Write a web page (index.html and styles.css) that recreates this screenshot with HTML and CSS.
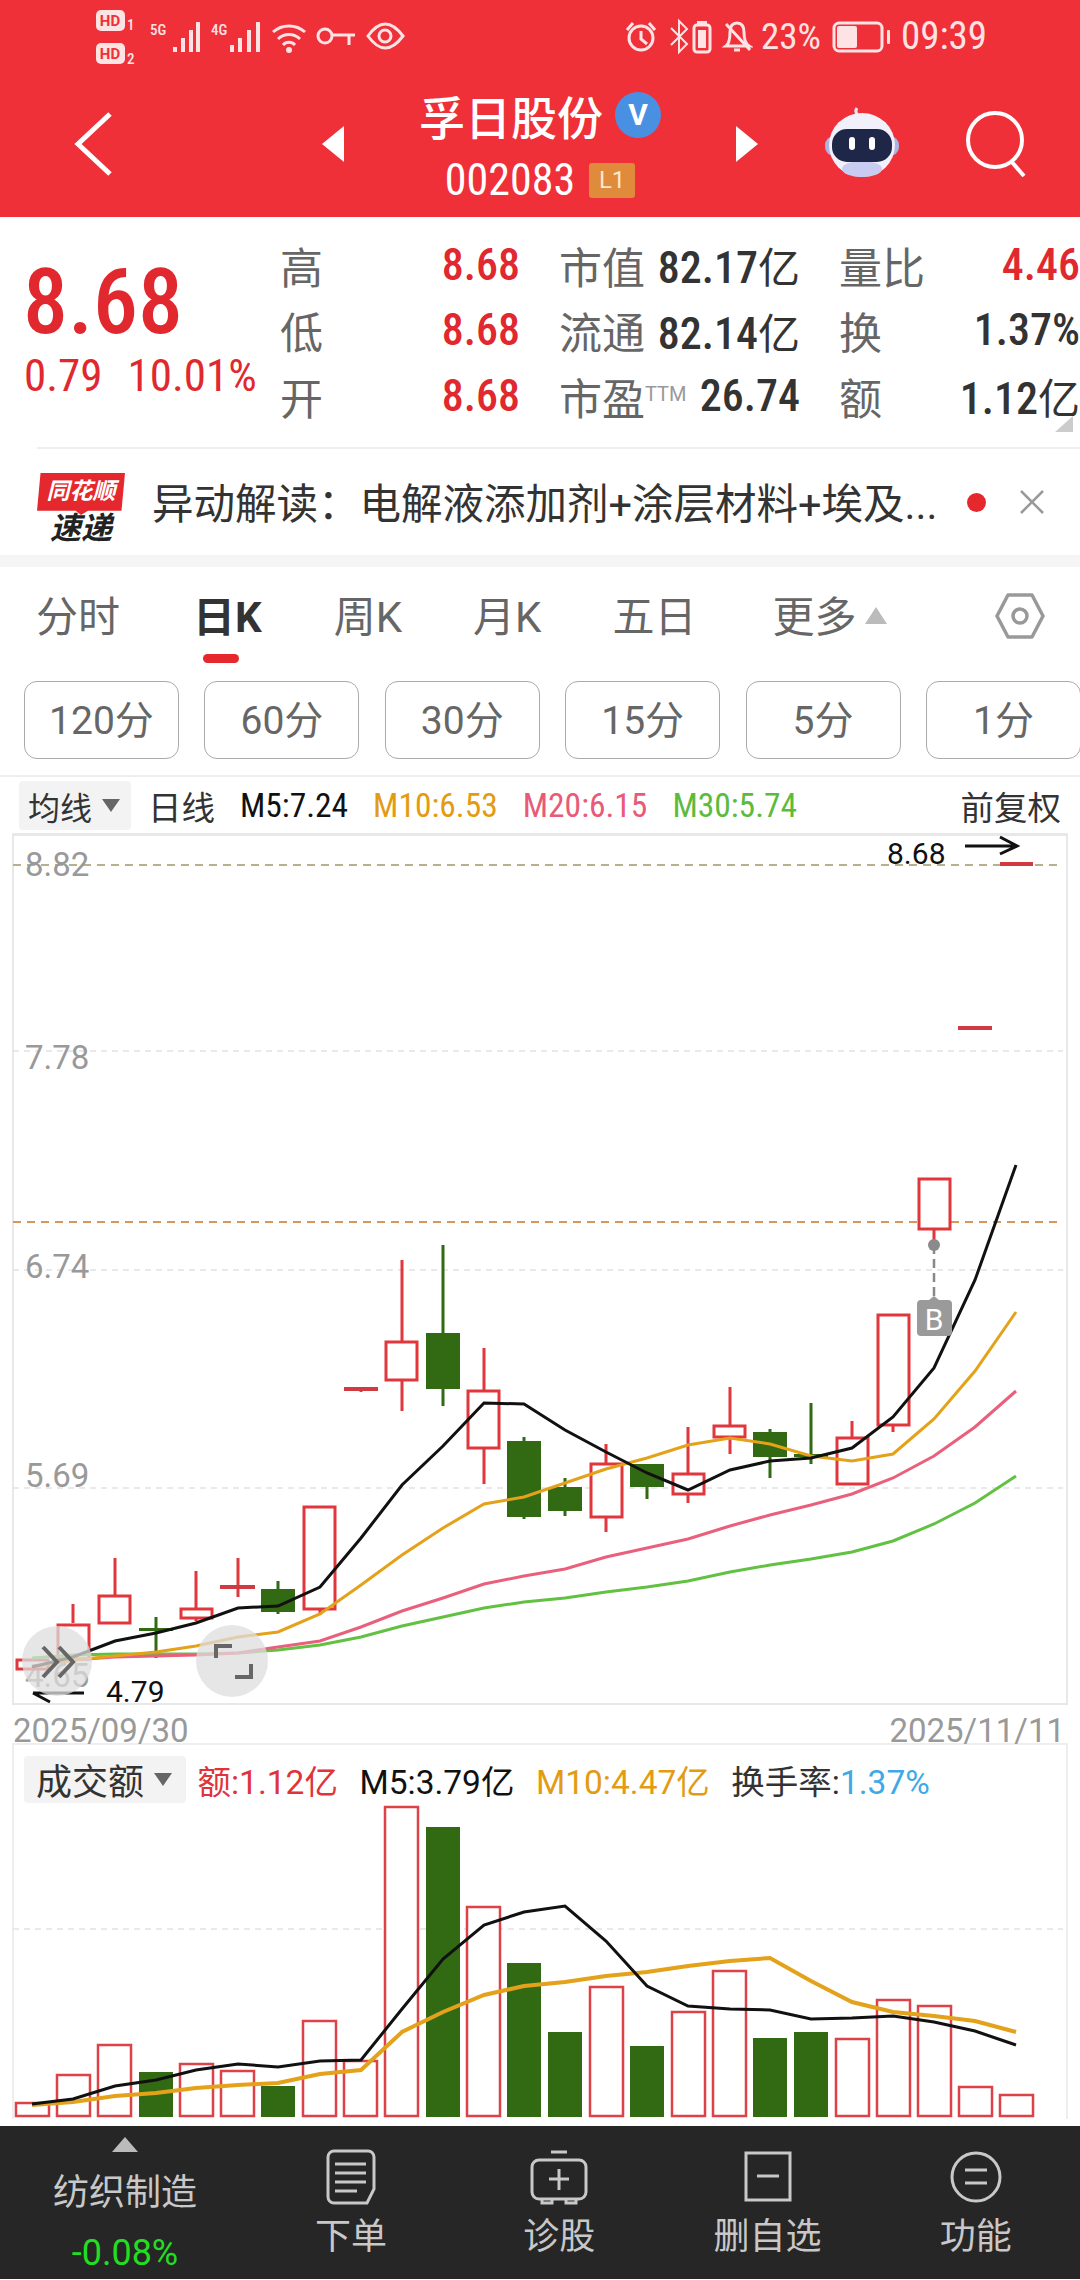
FILE: index.html
```html
<!DOCTYPE html>
<html lang="zh-CN">
<head>
    <meta charset="UTF-8">
    <meta name="viewport" content="width=device-width, initial-scale=1.0">
    <title>孚日股份 002083</title>
    <link rel="stylesheet" href="styles.css">
</head>
<body>
<div class="page">
    <header class="top">
        <!-- status bar -->
        <div class="status">
            <svg class="status-left" width="310" height="72" viewBox="95 0 310 72">
                <rect x="96" y="10" width="29" height="21" rx="5" class="si-fill"/>
                <text x="110" y="26" class="si-hd">HD</text>
                <text x="127" y="30" class="si-small">1</text>
                <rect x="96" y="43" width="29" height="21" rx="5" class="si-fill"/>
                <text x="110" y="59" class="si-hd">HD</text>
                <text x="127" y="64" class="si-small">2</text>
                <text x="150" y="35" class="si-small">5G</text>
                <path d="M175 47v5M183 38v14M191 30v22M198 22v30" class="si-bar"/>
                <text x="211" y="35" class="si-small">4G</text>
                <path d="M232 45v7M240 38v14M249 30v22M258 22v30" class="si-bar"/>
                <path d="M273 32a24 24 0 0 1 32 0M278 39a16 16 0 0 1 22 0M283 45a8 8 0 0 1 12 0" class="si-line"/>
                <circle cx="289" cy="50" r="3" class="si-fill"/>
                <circle cx="325" cy="36" r="7" class="si-line"/>
                <path d="M332 35h23M349 35v10" class="si-line"/>
                <path d="M368 36q17-24 35 0q-18 24-35 0z" class="si-line"/>
                <circle cx="385" cy="36" r="6" class="si-line"/>
            </svg>
            <svg class="status-right" width="128" height="72" viewBox="625 0 128 72">
                <circle cx="641" cy="38" r="12" class="si-line"/>
                <path d="M641 31v8l6 5" class="si-line"/>
                <path d="M627 30l6-7M655 30l-6-7" class="si-line"/>
                <path d="M671 28l16 16l-8 8v-31l8 8l-16 16" class="si-thin"/>
                <rect x="694" y="25" width="16" height="27" rx="3" class="si-line"/>
                <rect x="697" y="21" width="10" height="3" class="si-fill"/>
                <rect x="698" y="30" width="8" height="18" class="si-fill"/>
                <path d="M726 46q4-3 4-14q0-9 7-9q7 0 7 9q0 11 5 14zM734 50h6M726 24l24 26" class="si-line"/>
            </svg>
            <span class="status-pct">23%</span>
            <svg class="battery" width="60" height="72" viewBox="832 0 60 72">
                <rect x="834" y="23" width="48" height="28" rx="5" class="si-line"/>
                <rect x="837" y="26" width="20" height="22" rx="2" class="si-fill"/>
                <rect x="887" y="30" width="3" height="14" rx="1" class="si-fill"/>
            </svg>
            <span class="status-time">09:39</span>
        </div>

        <!-- stock title bar -->
        <div class="titlebar">
            <div class="title-left">
                <svg width="40" height="66" viewBox="0 0 40 66" class="back">
                    <path d="M36 3L4 33l32 30" fill="none" stroke="#fff" stroke-width="5"/>
                </svg>
            </div>
            <svg width="24" height="36" viewBox="0 0 24 36"><path d="M23 0v36L1 18z" fill="#fff"/></svg>
            <div class="title-mid">
                <div class="title-name">孚日股份<span class="v-badge">V</span></div>
                <div class="title-code"><span class="num">002083</span><span class="l1">L1</span></div>
            </div>
            <svg width="24" height="36" viewBox="0 0 24 36"><path d="M1 0v36l22-18z" fill="#fff"/></svg>
            <div class="title-right">
                <svg class="robot" width="74" height="72" viewBox="0 0 74 72">
                    <path d="M34 10q-5-4-2-8" fill="none" stroke="#e8e6f5" stroke-width="3"/>
                    <rect x="0" y="30" width="74" height="20" rx="9" fill="#aeb3e6"/>
                    <ellipse cx="37" cy="39" rx="33" ry="32" fill="#f1f0fb"/>
                    <ellipse cx="37" cy="63" rx="20" ry="8" fill="#c9cbf0"/>
                    <rect x="7" y="23" width="60" height="33" rx="15" fill="#1e2747"/>
                    <rect x="24" y="31" width="6" height="13" rx="3" fill="#fff"/>
                    <rect x="44" y="31" width="6" height="13" rx="3" fill="#fff"/>
                </svg>
                <svg width="62" height="66" viewBox="0 0 62 66">
                    <circle cx="30" cy="29" r="27" fill="none" stroke="#fff" stroke-width="4"/>
                    <path d="M46 50l13 15" fill="none" stroke="#fff" stroke-width="4"/>
                </svg>
            </div>
        </div>
    </header>

    <!-- quote numbers -->
    <section class="quote">
        <div class="price-box">
            <div class="price num">8.68</div>
            <div class="change num"><span>0.79</span><span>10.01%</span></div>
        </div>
        <div class="quote-grid">
            <div class="q-cell"><span class="q-label">高</span><span class="q-val up num">8.68</span></div>
            <div class="q-cell"><span class="q-label">市值</span><span class="q-val num">82.17<i>亿</i></span></div>
            <div class="q-cell"><span class="q-label">量比</span><span class="q-val up num">4.46</span></div>
            <div class="q-cell"><span class="q-label">低</span><span class="q-val up num">8.68</span></div>
            <div class="q-cell"><span class="q-label">流通</span><span class="q-val num">82.14<i>亿</i></span></div>
            <div class="q-cell"><span class="q-label">换</span><span class="q-val num">1.37%</span></div>
            <div class="q-cell"><span class="q-label">开</span><span class="q-val up num">8.68</span></div>
            <div class="q-cell"><span class="q-label">市盈<sup class="ttm">TTM</sup></span><span class="q-val num">26.74</span></div>
            <div class="q-cell"><span class="q-label">额</span><span class="q-val num">1.12<i>亿</i></span></div>
        </div>
        <span class="corner"></span>
    </section>

    <!-- news strip -->
    <section class="news">
        <div class="logo">
            <div class="logo-flag">同花顺</div>
            <div class="logo-sub">速递</div>
        </div>
        <div class="news-text">异动解读：电解液添加剂+涂层材料+埃及...</div>
        <span class="news-dot"></span>
        <svg class="news-close" width="26" height="26" viewBox="0 0 26 26">
            <path d="M2 2l22 22M24 2L2 24" fill="none" stroke="#999" stroke-width="2.5"/>
        </svg>
    </section>
    <div class="band"></div>

    <!-- period tabs -->
    <nav class="tabs">
        <span class="tab">分时</span>
        <span class="tab active">日K</span>
        <span class="tab">周K</span>
        <span class="tab">月K</span>
        <span class="tab">五日</span>
        <span class="tab more">更多<i class="more-arrow"></i></span>
        <svg class="gear" width="50" height="48" viewBox="0 0 50 48">
            <path d="M13 3h24l11 21l-11 21H13L2 24z" fill="none" stroke="#999" stroke-width="3.5" stroke-linejoin="round"/>
            <circle cx="25" cy="24" r="7" fill="none" stroke="#999" stroke-width="3.5"/>
        </svg>
    </nav>
    <div class="periods">
        <span class="period">120分</span>
        <span class="period">60分</span>
        <span class="period">30分</span>
        <span class="period">15分</span>
        <span class="period">5分</span>
        <span class="period">1分</span>
    </div>

    <!-- moving average legend -->
    <div class="legend">
        <span class="chip">均线<i class="chip-arrow"></i></span>
        <span class="lg-dark">日线</span>
        <span class="lg-black num">M5:7.24</span>
        <span class="lg-orange num">M10:6.53</span>
        <span class="lg-pink num">M20:6.15</span>
        <span class="lg-green num">M30:5.74</span>
        <span class="lg-dark adj">前复权</span>
    </div>

    <!-- K line chart, coordinates are page pixels -->
    <svg class="kline" width="1080" height="871" viewBox="0 835 1080 871">
        <path d="M13 835V1705H1067V835z" class="frame"/>
        <path d="M13 836H1067" class="frame"/>
        <path d="M13 1052H1063M13 1271H1063M13 1489H1063" class="grid"/>
        <path d="M13 866H1063" class="grid-high"/>
        <path d="M13 1223H1063" class="grid-now"/>

        <text x="25" y="877" class="axis">8.82</text>
        <text x="25" y="1070" class="axis">7.78</text>
        <text x="25" y="1279" class="axis">6.74</text>
        <text x="25" y="1488" class="axis">5.69</text>
        <text x="25" y="1688" class="axis">4.65</text>

        <!-- wicks -->
        <path class="wick-up" d="M73 1605V1624M115 1559V1597M196 1572V1622M238 1559V1598M320 1610V1616M361 1390V1393M402 1261V1412M484 1349V1485M606 1445V1533M688 1428V1504M730 1388V1455M852 1422V1438M893 1426V1433M934 1230V1245"/>
        <path class="wick-down" d="M156 1618V1659M278 1582V1615M443 1246V1407M524 1438V1520M565 1479V1517M647 1465V1500M770 1430V1479M811 1404V1465"/>
        <!-- rising days -->
        <g class="up-body">
            <rect x="17" y="1661" width="31" height="9"/>
            <rect x="58" y="1626" width="31" height="34"/>
            <rect x="99" y="1597" width="31" height="27"/>
            <rect x="181" y="1610" width="31" height="9"/>
            <rect x="304" y="1508" width="31" height="102"/>
            <rect x="386" y="1343" width="31" height="38"/>
            <rect x="468" y="1392" width="31" height="57"/>
            <rect x="591" y="1465" width="31" height="53"/>
            <rect x="673" y="1475" width="31" height="20"/>
            <rect x="714" y="1427" width="31" height="11"/>
            <rect x="837" y="1439" width="31" height="46"/>
            <rect x="878" y="1316" width="31" height="110"/>
            <rect x="919" y="1180" width="31" height="50"/>
        </g>
        <path class="flat-up" d="M220 1588H255M344 1390H378M958 1029H992M1000 865H1033"/>
        <!-- falling days -->
        <g class="down-body">
            <rect x="139" y="1629" width="34" height="3"/>
            <rect x="261" y="1590" width="34" height="23"/>
            <rect x="426" y="1334" width="34" height="56"/>
            <rect x="507" y="1442" width="34" height="76"/>
            <rect x="548" y="1488" width="34" height="24"/>
            <rect x="630" y="1465" width="34" height="23"/>
            <rect x="753" y="1433" width="34" height="25"/>
            <rect x="794" y="1455" width="34" height="3"/>
        </g>

        <polyline class="ma30" points="32,1659 73,1656 115,1655 156,1655 196,1655 238,1654 278,1651 320,1646 361,1638 402,1627 443,1618 484,1609 524,1603 565,1599 606,1593 647,1588 688,1582 730,1573 770,1566 811,1560 852,1553 893,1542 934,1525 975,1504 1016,1477"/>
        <polyline class="ma20" points="32,1667 73,1661 115,1658 156,1657 196,1656 238,1654 278,1648 320,1642 361,1628 402,1612 443,1599 484,1585 524,1577 565,1570 606,1558 647,1549 688,1540 730,1527 770,1516 811,1506 852,1495 893,1479 934,1457 975,1428 1016,1392"/>
        <polyline class="ma10" points="32,1668 73,1661 115,1657 156,1653 196,1647 238,1638 278,1633 320,1615 361,1586 402,1556 443,1529 484,1505 524,1498 565,1484 606,1470 647,1459 688,1446 730,1439 770,1445 811,1457 852,1462 893,1455 934,1420 975,1372 1016,1313"/>
        <polyline class="ma5" points="32,1668 73,1658 115,1642 156,1634 196,1624 238,1609 278,1607 320,1588 361,1539 402,1486 443,1447 484,1404 524,1405 565,1431 606,1453 647,1474 688,1491 730,1471 770,1462 811,1459 852,1449 893,1418 934,1369 975,1281 1016,1166"/>

        <!-- high and low flags -->
        <text x="887" y="865" class="flag-text">8.68</text>
        <path d="M965 847H1016M1000 838l17 9l-17 8" class="flag-arrow"/>
        <text x="106" y="1703" class="flag-text">4.79</text>
        <path d="M84 1694H33M50 1703l-17-9" class="flag-arrow"/>

        <!-- buy marker -->
        <path d="M934 1246V1298" class="b-line"/>
        <circle cx="934" cy="1246" r="6" fill="#8a8a8a"/>
        <path d="M921 1301h8l5-4l5 4h9a4 4 0 0 1 4 4v28a4 4 0 0 1-4 4h-27a4 4 0 0 1-4-4v-28a4 4 0 0 1 4-4z" fill="#9a9a9a"/>
        <text x="934" y="1331" class="b-text">B</text>

        <!-- floating chart buttons -->
        <circle cx="57" cy="1662" r="35" class="float-btn"/>
        <path d="M43 1648l14 15l-14 15M59 1648l14 15l-14 15" class="float-mark"/>
        <circle cx="232" cy="1662" r="36" class="float-btn"/>
        <path d="M216 1659v-12h16M251 1665v13h-16" class="float-mark"/>
    </svg>

    <div class="dates"><span>2025/09/30</span><span>2025/11/11</span></div>

    <!-- turnover panel -->
    <section class="vol">
        <div class="vol-legend">
            <span class="chip chip-wide">成交额<i class="chip-arrow"></i></span>
            <span class="lg-red">额:1.12亿</span>
            <span class="lg-black">M5:3.79亿</span>
            <span class="lg-orange">M10:4.47亿</span>
            <span class="lg-dark">换手率:<b class="lg-blue">1.37%</b></span>
        </div>
        <svg class="vol-chart" width="1080" height="316" viewBox="0 1804 1080 316">
            <path d="M13 1930H1063" class="grid"/>
            <g class="vol-up">
                <rect x="16" y="2104" width="33" height="13"/>
                <rect x="57" y="2076" width="33" height="41"/>
                <rect x="98" y="2046" width="33" height="71"/>
                <rect x="180" y="2065" width="33" height="52"/>
                <rect x="221" y="2072" width="33" height="45"/>
                <rect x="303" y="2022" width="33" height="95"/>
                <rect x="344" y="2062" width="33" height="55"/>
                <rect x="385" y="1808" width="33" height="309"/>
                <rect x="467" y="1908" width="33" height="209"/>
                <rect x="590" y="1988" width="33" height="129"/>
                <rect x="672" y="2013" width="33" height="104"/>
                <rect x="713" y="1972" width="33" height="145"/>
                <rect x="836" y="2040" width="33" height="77"/>
                <rect x="877" y="2001" width="33" height="116"/>
                <rect x="918" y="2007" width="33" height="110"/>
                <rect x="959" y="2088" width="33" height="29"/>
                <rect x="1000" y="2096" width="33" height="21"/>
            </g>
            <g class="vol-down">
                <rect x="139" y="2073" width="34" height="45"/>
                <rect x="261" y="2087" width="34" height="31"/>
                <rect x="426" y="1828" width="34" height="290"/>
                <rect x="507" y="1964" width="34" height="154"/>
                <rect x="548" y="2033" width="34" height="85"/>
                <rect x="630" y="2047" width="34" height="71"/>
                <rect x="753" y="2039" width="34" height="79"/>
                <rect x="794" y="2033" width="34" height="85"/>
            </g>
            <polyline class="vol-ma10" points="32,2106 73,2103 115,2097 156,2094 196,2089 238,2086 278,2084 320,2075 361,2071 402,2033 443,2013 484,1996 524,1987 565,1983 606,1977 647,1973 688,1967 730,1962 770,1959 811,1982 852,2003 893,2013 934,2017 975,2022 1016,2033"/>
            <polyline class="ma5" points="32,2105 73,2100 115,2087 156,2081 196,2071 238,2065 278,2068 320,2062 361,2061 402,2010 443,1960 484,1926 524,1913 565,1907 606,1942 647,1987 688,2007 730,2010 770,2011 811,2020 852,2019 893,2017 934,2023 975,2032 1016,2046"/>
        </svg>
    </section>

    <!-- bottom toolbar -->
    <footer class="toolbar">
        <div class="sector">
            <i class="sector-arrow"></i>
            <div class="sector-name">纺织制造</div>
            <div class="sector-pct">-0.08%</div>
        </div>
        <div class="tool">
            <svg width="50" height="56" viewBox="0 0 50 56">
                <path d="M8 2h34a6 6 0 0 1 6 6v32l-7 14H8a6 6 0 0 1-6-6V8a6 6 0 0 1 6-6z" class="tool-line"/>
                <path d="M9 15h31M9 24h31M9 33h31M9 42h22" class="tool-line"/>
            </svg>
            <span>下单</span>
        </div>
        <div class="tool">
            <svg width="58" height="56" viewBox="0 0 58 56">
                <path d="M21 3h16" class="tool-line"/>
                <rect x="2" y="11" width="54" height="39" rx="7" class="tool-line"/>
                <path d="M29 20v21M19 30h20M12 50v4h10v-4M36 50v4h10v-4" class="tool-line"/>
            </svg>
            <span>诊股</span>
        </div>
        <div class="tool">
            <svg width="48" height="56" viewBox="0 0 48 56">
                <rect x="2" y="4" width="44" height="47" class="tool-line"/>
                <path d="M13 27h22" class="tool-line"/>
            </svg>
            <span>删自选</span>
        </div>
        <div class="tool">
            <svg width="52" height="56" viewBox="0 0 52 56">
                <circle cx="26" cy="28" r="24" class="tool-line"/>
                <path d="M15 21h22M15 34h22" class="tool-line"/>
            </svg>
            <span>功能</span>
        </div>
    </footer>
</div>
</body>
</html>
```

FILE: styles.css
```css
* {
    box-sizing: border-box;
}
body {
    margin: 0;
    background-color: white;
    font-family: Roboto, "Noto Sans CJK SC", sans-serif;
}
i {
    font-style: normal;
}
svg {
    display: block;
    flex: none;
}
.page {
    width: 1080px;
    height: 2280px;
    overflow: hidden;
}
/* narrow digits used in the quote block */
.num {
    font-stretch: 85%;
}

/* red header */
.top {
    background-color: #ef3039;
    color: white;
    height: 217px;
}
.status {
    display: flex;
    align-items: center;
    height: 72px;
    padding-left: 95px;
    color: #fde3e3;
}
.status-right {
    margin-left: 220px;
}
.status-pct {
    width: 79px;
    padding-left: 8px;
    font-size: 37px;
    font-stretch: 85%;
    white-space: nowrap;
}
.status-time {
    margin-left: 9px;
    font-size: 39px;
    font-stretch: 85%;
}
.si-fill {
    fill: #fde3e3;
}
.si-line {
    fill: none;
    stroke: #fde3e3;
    stroke-width: 3;
}
.si-thin {
    fill: none;
    stroke: #fde3e3;
    stroke-width: 2;
}
.si-bar {
    fill: none;
    stroke: #fde3e3;
    stroke-width: 4;
}
.si-hd {
    fill: #ef3039;
    font-size: 15px;
    font-weight: bold;
    text-anchor: middle;
}
.si-small {
    fill: #fde3e3;
    font-size: 15px;
    font-weight: 500;
    font-stretch: 85%;
}
.titlebar {
    display: flex;
    align-items: center;
    height: 144px;
}
.title-left {
    width: 321px;
    padding-left: 74px;
}
.title-mid {
    width: 390px;
    text-align: center;
}
.title-right {
    display: flex;
    align-items: center;
    padding-left: 66px;
}
.robot {
    margin-right: 66px;
    margin-top: -4px;
}
.title-name {
    display: flex;
    align-items: center;
    justify-content: center;
    height: 56px;
    margin-top: -1px;
    font-size: 46px;
    font-weight: 500;
}
.v-badge {
    width: 46px;
    height: 46px;
    margin-left: 12px;
    border-radius: 50%;
    background-color: #4a90e2;
    font-size: 30px;
    font-weight: bold;
    line-height: 46px;
}
.title-code {
    display: flex;
    align-items: center;
    justify-content: center;
    height: 40px;
    margin-top: 17px;
    font-size: 44px;
}
.l1 {
    width: 46px;
    height: 35px;
    margin-left: 14px;
    background-color: #e08a3c;
    border-radius: 3px;
    color: #fde8cc;
    font-size: 24px;
    line-height: 35px;
}

/* quote block */
.quote {
    position: relative;
    display: flex;
    height: 230px;
}
.price-box {
    width: 280px;
    padding-left: 23px;
    color: #e0282e;
}
.price {
    height: 131px;
    padding-top: 41px;
    font-size: 90px;
    line-height: 90px;
    font-weight: 500;
}
.change {
    display: flex;
    gap: 25px;
    margin-top: 4px;
    padding-left: 1px;
    font-size: 45px;
    line-height: 48px;
    white-space: nowrap;
}
.quote-grid {
    display: grid;
    grid-template-columns: 240px 241px 241px;
    grid-auto-rows: 65.5px;
    column-gap: 39px;
    padding-top: 15px;
}
.q-cell {
    display: flex;
    align-items: center;
    justify-content: space-between;
    white-space: nowrap;
}
.q-label {
    color: #666;
    font-size: 43px;
}
.q-val {
    color: #333;
    font-size: 44px;
    font-weight: 500;
}
.q-val i {
    font-size: 42px;
    font-weight: 400;
}
.q-val.up {
    color: #e0282e;
}
.ttm {
    font-size: 20px;
    color: #999;
    vertical-align: 14px;
    line-height: 0;
}
.corner {
    position: absolute;
    right: 7px;
    bottom: 15px;
    border-left: 18px solid transparent;
    border-bottom: 16px solid #ccc;
}

/* news strip */
.news {
    display: flex;
    align-items: center;
    height: 108px;
    margin-left: 37px;
    border-top: 2px solid #eee;
}
.logo {
    width: 88px;
    height: 72px;
    margin-top: 14px;
    font-style: italic;
    font-weight: bold;
    text-align: center;
}
.logo-flag {
    height: 42px;
    background-color: #e5282e;
    color: white;
    font-size: 23px;
    line-height: 38px;
    clip-path: polygon(4% 0, 100% 0, 96% 90%, 58% 90%, 50% 100%, 44% 90%, 0 90%);
}
.logo-sub {
    margin-top: -4px;
    font-size: 31px;
    line-height: 36px;
    color: #222;
}
.news-text {
    width: 819px;
    margin: -3px 0 0 27px;
    font-size: 41.5px;
    color: #333;
    white-space: nowrap;
}
.news-dot {
    width: 19px;
    height: 19px;
    margin-left: -4px;
    border-radius: 50%;
    background-color: #e5282e;
}
.news-close {
    margin-left: 33px;
}
.band {
    height: 12px;
    background-color: #f5f5f5;
}

/* tabs */
.tabs {
    display: flex;
    align-items: flex-start;
    gap: 71px;
    height: 96px;
    padding: 23px 0 0 36px;
}
.tab {
    display: block;
    height: 74px;
    color: #666;
    font-size: 42px;
    line-height: 56px;
    white-space: nowrap;
}
.tab.active {
    margin: 0 1px 0 2px;
    color: #333;
    font-weight: bold;
}
.tab.active::after {
    content: "";
    display: block;
    width: 36px;
    height: 9px;
    margin: 8px 0 0 10px;
    border-radius: 5px;
    background-color: #e5282e;
}
.more-arrow {
    display: inline-block;
    margin-left: 9px;
    vertical-align: 8px;
    border-left: 11px solid transparent;
    border-right: 11px solid transparent;
    border-bottom: 17px solid #bbb;
}
.tab.more {
    margin-left: 5px;
}
.gear {
    margin: 2px 0 0 37px;
}
.periods {
    display: flex;
    gap: 25.4px;
    padding-left: 24px;
    margin-top: 18px;
    height: 96px;
    border-bottom: 2px solid #eee;
}
.period {
    flex: none;
    width: 155px;
    height: 78px;
    border: 1.5px solid #aaa;
    border-radius: 13px;
    color: #666;
    font-size: 39px;
    line-height: 79px;
    text-align: center;
}

/* legends */
.legend {
    display: flex;
    align-items: center;
    gap: 25px;
    height: 57px;
    padding: 0 19px;
    font-size: 33.5px;
    white-space: nowrap;
}
.chip {
    display: flex;
    align-items: center;
    width: 112px;
    height: 49px;
    margin-right: -8px;
    padding-left: 9px;
    border-radius: 4px;
    background-color: #f3f3f3;
    color: #333;
    font-size: 32px;
}
.chip-arrow {
    margin-left: 10px;
    border-left: 9px solid transparent;
    border-right: 9px solid transparent;
    border-top: 13px solid #666;
}
.adj {
    margin-left: auto;
}
.lg-dark {
    color: #333;
}
.lg-black {
    color: #111;
}
.lg-orange {
    color: #e39b12;
}
.lg-pink {
    color: #e85a78;
}
.lg-green {
    color: #5cbb3c;
}
.lg-red {
    color: #e0343a;
}
.lg-blue {
    color: #3fa9e8;
    font-weight: normal;
}

/* K line chart */
.kline {
    overflow: visible;
}
.frame {
    fill: none;
    stroke: #e8e8e8;
    stroke-width: 2;
}
.grid {
    fill: none;
    stroke: #e2e2e2;
    stroke-width: 1.5;
    stroke-dasharray: 6 5;
}
.grid-high {
    fill: none;
    stroke: #b8b08c;
    stroke-width: 2;
    stroke-dasharray: 8 6;
}
.grid-now {
    fill: none;
    stroke: #d8965a;
    stroke-width: 2;
    stroke-dasharray: 8 6;
}
.axis {
    fill: #999;
    font-size: 33px;
}
.wick-up {
    fill: none;
    stroke: #e0363c;
    stroke-width: 3;
}
.wick-down {
    fill: none;
    stroke: #316a12;
    stroke-width: 3;
}
.up-body rect {
    fill: white;
    stroke: #e0363c;
    stroke-width: 3;
}
.flat-up {
    fill: none;
    stroke: #d03a40;
    stroke-width: 4;
}
.down-body rect {
    fill: #316a12;
}
.ma5, .ma10, .ma20, .ma30 {
    fill: none;
    stroke-width: 3;
}
.ma5 {
    stroke: #111;
}
.ma10 {
    stroke: #e3a21a;
}
.ma20 {
    stroke: #e8607c;
}
.ma30 {
    stroke: #62c043;
}
.flag-text {
    fill: #111;
    font-size: 30px;
}
.flag-arrow {
    fill: none;
    stroke: #111;
    stroke-width: 3;
}
.b-line {
    fill: none;
    stroke: #888;
    stroke-width: 2.5;
    stroke-dasharray: 9 5;
}
.b-text {
    fill: white;
    font-size: 30px;
    text-anchor: middle;
}
.float-btn {
    fill: rgba(222, 222, 222, 0.75);
}
.float-mark {
    fill: none;
    stroke: #666;
    stroke-width: 4;
}
.dates {
    display: flex;
    justify-content: space-between;
    height: 38px;
    padding: 0 15px 0 13px;
    color: #999;
    font-size: 33px;
    line-height: 52px;
}

/* turnover panel */
.vol {
    height: 376px;
    margin: 0 12px;
    border: solid #eee;
    border-width: 2px 2px 0;
}
.vol-legend {
    display: flex;
    align-items: center;
    gap: 21.5px;
    height: 58px;
    padding: 10px 0 0 10px;
    font-size: 33.5px;
    white-space: nowrap;
}
.chip-wide {
    width: 162px;
    height: 47px;
    padding-left: 12px;
    margin-right: -10px;
    font-size: 36px;
}
.vol-chart {
    margin-left: -14px;
}
.vol-up rect {
    fill: white;
    stroke: #dc4248;
    stroke-width: 2.5;
}
.vol-down rect {
    fill: #316a12;
}
.vol-ma10 {
    fill: none;
    stroke: #e3a21a;
    stroke-width: 4;
}

/* bottom toolbar */
.toolbar {
    display: grid;
    grid-template-columns: 247px repeat(4, 208.25px);
    height: 153px;
    margin-top: 7px;
    background-color: #262626;
    color: #c8c8c8;
}
.sector {
    text-align: center;
}
.sector-arrow {
    display: block;
    width: 0;
    margin: 11px auto 0 112px;
    border-left: 13px solid transparent;
    border-right: 13px solid transparent;
    border-bottom: 15px solid #bbb;
}
.sector-name {
    width: 250px;
    margin-top: 21px;
    font-size: 36px;
    line-height: 40px;
}
.sector-pct {
    width: 250px;
    margin-top: 19px;
    color: #22dd22;
    font-size: 36px;
    line-height: 42px;
}
.tool {
    display: flex;
    flex-direction: column;
    align-items: center;
    padding-top: 23px;
    font-size: 36px;
}
.tool span {
    margin-top: 10px;
    line-height: 44px;
}
.tool-line {
    fill: none;
    stroke: #c8c8c8;
    stroke-width: 3;
}
```
